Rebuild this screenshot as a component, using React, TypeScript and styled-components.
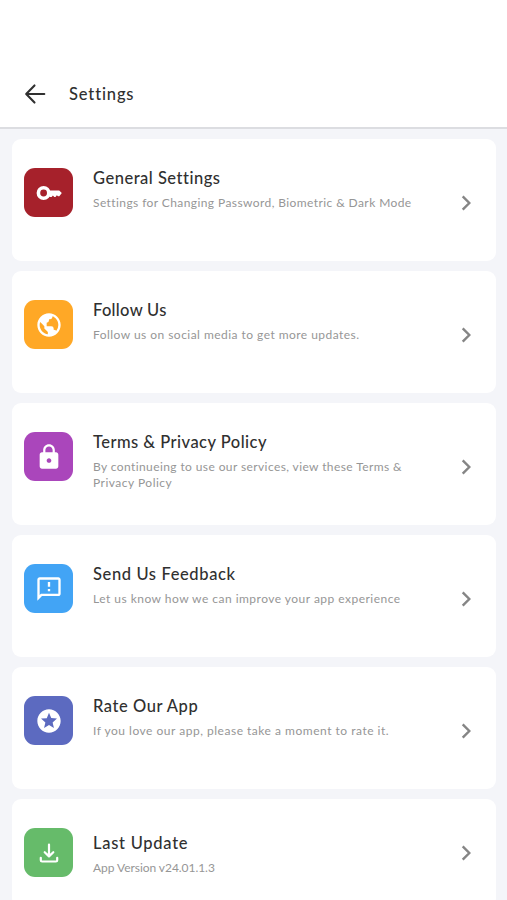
import React from "react";
import styled, { createGlobalStyle } from "styled-components";
import { BiWorld } from "react-icons/bi";
import { MdLock, MdOutlineFeedback, MdStars } from "react-icons/md";

const GlobalStyle = createGlobalStyle`
  * { box-sizing: border-box; }
  body {
    margin: 0;
    background: #f4f5f9;
    font-family: Lato, sans-serif;
    font-variant-ligatures: none;
  }
`;

const Screen = styled.div`
  height: 900px;
  overflow: hidden;
  background: #f4f5f9;
`;

const Header = styled.header`
  display: flex;
  align-items: center;
  gap: 22px;
  height: 129px;
  padding: 60px 23px 0;
  background: #fff;
  border-bottom: 2px solid #dcdde1;
  color: #303030;
`;

const HeaderTitle = styled.h1`
  margin: 0;
  font-size: 16.5px;
  font-weight: 500;
  line-height: 20px;
  letter-spacing: 0.85px;
`;

const List = styled.main`
  display: flex;
  flex-direction: column;
  gap: 10px;
  padding: 10px 11px 0 12px;
`;

const Card = styled.section<{ $last: boolean }>`
  display: flex;
  flex: none;
  align-items: flex-start;
  height: ${(p) => (p.$last ? 108 : 122)}px;
  padding: 29px 18px 0 12px;
  border-radius: 9px;
  background: #fff;
`;

const IconTile = styled.div<{ $color: string }>`
  display: flex;
  flex: none;
  align-items: center;
  justify-content: center;
  width: 49px;
  height: 49px;
  border-radius: 11px;
  background: ${(p) => p.$color};
  color: #fff;
`;

const Copy = styled.div<{ $last: boolean }>`
  flex: 1;
  min-width: 0;
  padding: ${(p) => (p.$last ? 5 : 0)}px 0 0 20px;
`;

const Title = styled.h2<{ $tracking: number }>`
  margin: 0;
  color: #303030;
  font-size: 16.5px;
  font-weight: 500;
  line-height: 20px;
  letter-spacing: ${(p) => p.$tracking}px;
  white-space: nowrap;
`;

const Description = styled.div`
  padding-top: 7px;
`;

const Line = styled.span<{ $tracking: number }>`
  display: block;
  color: #969696;
  font-size: 12px;
  line-height: 16px;
  letter-spacing: ${(p) => p.$tracking}px;
  white-space: nowrap;
`;

const ChevronSlot = styled.div<{ $last: boolean }>`
  display: flex;
  flex: none;
  padding-top: ${(p) => (p.$last ? 12.5 : 22.5)}px;
`;

const BackArrow = () => (
  <svg width="24" height="24" viewBox="0 0 24 24" fill="none" stroke="currentColor" strokeWidth="2.1" strokeLinecap="round" strokeLinejoin="round">
    <path d="M21.3 12H3.6M11.5 3.4 3.2 12l8.3 8.6" />
  </svg>
);

const Chevron = () => (
  <svg width="24" height="24" viewBox="0 0 24 24" fill="none" stroke="#858585" strokeWidth="2.4">
    <path d="m8.7 5.4 6.6 6.6-6.6 6.6" />
  </svg>
);

const KeyIcon = () => (
  <svg width="26" height="16" viewBox="0 0 26 16">
    <circle cx="7.6" cy="8" r="5.2" fill="none" stroke="currentColor" strokeWidth="3.6" />
    <path fill="currentColor" d="M13 5.4h10.2L25.8 8l-2.5 3.2h-1.2l-1.3-1-1.3 1.7h-1.2l-1.4-1.4-1.3 1.4H14l-1.2-.8z" />
  </svg>
);

const DownloadIcon = () => (
  <svg width="24" height="24" viewBox="0 0 24 24" fill="none" stroke="currentColor" strokeWidth="2.2" strokeLinecap="round" strokeLinejoin="round">
    <path d="M12 3.6V15M7.7 11.2 12 15.4l4.3-4.2M3.8 16.8v2.4c0 .8.5 1.3 1.3 1.3h13.8c.8 0 1.3-.5 1.3-1.3v-2.4" />
  </svg>
);

type Text = { text: string; tracking: number };
type Item = { title: Text; lines: Text[]; color: string; icon: React.ReactNode };

const items: Item[] = [
  {
    title: { text: "General Settings", tracking: 0.5 },
    lines: [{ text: "Settings for Changing Password, Biometric & Dark Mode", tracking: 0.41 }],
    color: "#a6212b",
    icon: <KeyIcon />,
  },
  {
    title: { text: "Follow Us", tracking: 0.3 },
    lines: [{ text: "Follow us on social media to get more updates.", tracking: 0.46 }],
    color: "#ffa826",
    icon: <BiWorld size={28} />,
  },
  {
    title: { text: "Terms & Privacy Policy", tracking: 0.47 },
    lines: [
      { text: "By continueing to use our services, view these Terms &", tracking: 0.4 },
      { text: "Privacy Policy", tracking: 0.49 },
    ],
    color: "#aa46bb",
    icon: <MdLock size={28} />,
  },
  {
    title: { text: "Send Us Feedback", tracking: 0.62 },
    lines: [{ text: "Let us know how we can improve your app experience", tracking: 0.475 }],
    color: "#42a4f5",
    icon: <MdOutlineFeedback size={28} />,
  },
  {
    title: { text: "Rate Our App", tracking: 0.55 },
    lines: [{ text: "If you love our app, please take a moment to rate it.", tracking: 0.51 }],
    color: "#5c6ac0",
    icon: <MdStars size={28} />,
  },
  {
    title: { text: "Last Update", tracking: 0.72 },
    lines: [{ text: "App Version v24.01.1.3", tracking: -0.05 }],
    color: "#66bb6a",
    icon: <DownloadIcon />,
  },
];

export default function App() {
  return (
    <Screen>
      <GlobalStyle />
      <Header>
        <BackArrow />
        <HeaderTitle>Settings</HeaderTitle>
      </Header>
      <List>
        {items.map((item, i) => {
          const last = i === items.length - 1;
          return (
            <Card key={item.title.text} $last={last}>
              <IconTile $color={item.color}>{item.icon}</IconTile>
              <Copy $last={last}>
                <Title $tracking={item.title.tracking}>{item.title.text}</Title>
                <Description>
                  {item.lines.map((line) => (
                    <Line key={line.text} $tracking={line.tracking}>{line.text}</Line>
                  ))}
                </Description>
              </Copy>
              <ChevronSlot $last={last}>
                <Chevron />
              </ChevronSlot>
            </Card>
          );
        })}
      </List>
    </Screen>
  );
}
